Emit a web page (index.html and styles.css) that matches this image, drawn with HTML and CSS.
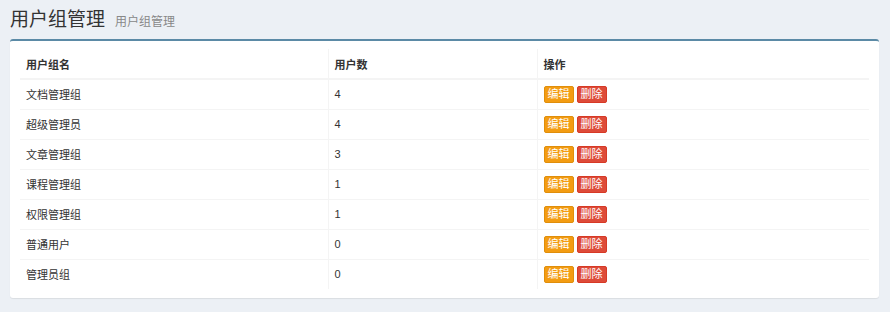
FILE: index.html
```html
<!DOCTYPE html>
<html lang="zh">
<head>
<meta charset="utf-8">
<link rel="stylesheet" href="styles.css">
</head>
<body>
<section class="header">
  <h1>用户组管理<small>用户组管理</small></h1>
</section>
<div class="box">
  <table class="table">
    <colgroup><col class="c1"><col class="c2"><col class="c3"></colgroup>
    <thead>
      <tr><th>用户组名</th><th>用户数</th><th>操作</th></tr>
    </thead>
    <tbody>
      <tr><td>文档管理组</td><td>4</td><td><span class="btn edit">编辑</span><span class="btn del">删除</span></td></tr>
      <tr><td>超级管理员</td><td>4</td><td><span class="btn edit">编辑</span><span class="btn del">删除</span></td></tr>
      <tr><td>文章管理组</td><td>3</td><td><span class="btn edit">编辑</span><span class="btn del">删除</span></td></tr>
      <tr><td>课程管理组</td><td>1</td><td><span class="btn edit">编辑</span><span class="btn del">删除</span></td></tr>
      <tr><td>权限管理组</td><td>1</td><td><span class="btn edit">编辑</span><span class="btn del">删除</span></td></tr>
      <tr><td>普通用户</td><td>0</td><td><span class="btn edit">编辑</span><span class="btn del">删除</span></td></tr>
      <tr><td>管理员组</td><td>0</td><td><span class="btn edit">编辑</span><span class="btn del">删除</span></td></tr>
    </tbody>
  </table>
</div>
</body>
</html>
```
FILE: styles.css
```css
html, body {
  margin: 0;
  padding: 0;
}
body {
  background: #ecf0f5;
  font-family: "Liberation Sans", "Noto Sans CJK SC", sans-serif;
  color: #333;
  width: 890px;
  height: 312px;
  overflow: hidden;
}
.header {
  padding: 8px 10px 0 10px;
  height: 39px;
  box-sizing: border-box;
}
.header h1 {
  margin: 0;
  font-size: 19px;
  font-weight: 400;
  line-height: 23px;
  color: #333;
}
.header small {
  font-size: 12px;
  color: #888;
  margin-left: 10px;
}
.box {
  margin: 0 11px 0 10px;
  background: #fff;
  border-top: 2px solid #5b8aa6;
  border-radius: 3px;
  box-shadow: 0 1px 1px rgba(0,0,0,0.08);
  padding: 8px 10px 9px 10px;
}
.table {
  width: 100%;
  border-collapse: collapse;
  table-layout: fixed;
  font-size: 11px;
}
.c1 { width: 308px; }
.c2 { width: 209px; }
.table th,
.table td {
  text-align: left;
  height: 30px;
  padding: 0 6px;
  box-sizing: border-box;
  border: 1px solid #f4f4f4;
  vertical-align: middle;
}
.table th {
  font-weight: 700;
  border-bottom: 2px solid #f4f4f4;
  border-top: 0;
}
.table tr > :first-child { border-left: 0; }
.table tr > :last-child { border-right: 0; }
.table tbody tr:last-child td { border-bottom: 0; }
.btn {
  display: inline-block;
  color: #fff;
  font-size: 11px;
  line-height: 15px;
  padding: 0 3px;
  border-radius: 2px;
  margin-right: 3px;
  vertical-align: middle;
}
.edit { background: #f39c12; border: 1px solid #e08e0b; }
.del { background: #dd4b39; border: 1px solid #d73925; }
```
